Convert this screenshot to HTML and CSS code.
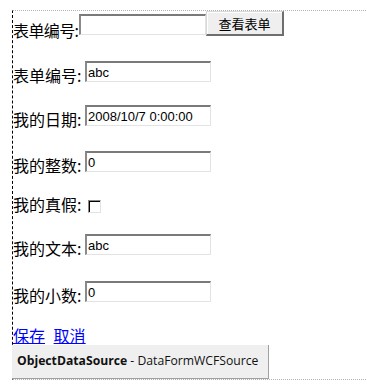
FILE: index.html
```html
<!DOCTYPE html>
<html lang="zh">
<head>
  <meta charset="UTF-8">
  <title>DataForm</title>
  <link rel="stylesheet" href="styles.css">
</head>
<body>

  <div class="design">
    <!-- lookup row -->
    <div class="row row-top">
      <label class="lbl lbl-tight">表单编号:</label>
      <input type="text" class="box box-top">
      <button type="button" class="view-btn">查看表单</button>
    </div>

    <!-- form fields -->
    <div class="row r2">
      <label class="lbl">表单编号:</label>
      <input type="text" class="box" value="abc">
    </div>
    <div class="row r3">
      <label class="lbl">我的日期:</label>
      <input type="text" class="box" value="2008/10/7 0:00:00">
    </div>
    <div class="row r4">
      <label class="lbl">我的整数:</label>
      <input type="text" class="box" value="0">
    </div>
    <div class="row r5">
      <label class="lbl">我的真假:</label>
      <input type="checkbox" class="check">
    </div>
    <div class="row r6">
      <label class="lbl">我的文本:</label>
      <input type="text" class="box" value="abc">
    </div>
    <div class="row r7">
      <label class="lbl">我的小数:</label>
      <input type="text" class="box" value="0">
    </div>

    <div class="actions">
      <a href="#">保存</a>
      <a href="#">取消</a>
    </div>

    <div class="ods"><b>ObjectDataSource</b> - DataFormWCFSource</div>
  </div>

</body>
</html>
```

FILE: styles.css
```css
body {
  margin: 0;
  overflow: hidden;
  background: #fff;
  color: #000;
  font-family: "Noto Sans CJK SC", sans-serif;
}

.design {
  margin: 10px 0 0 12px;
  width: 355px;
  height: 368px;
  border-top: 1px dotted #b4b4b4;
  border-bottom: 1px dotted #b4b4b4;
  border-left: 1px dashed #000;
  display: flex;
  flex-direction: column;
}

.row {
  display: flex;
  align-items: flex-start;
  height: 21px;
}

.row-top { height: 26px; }
.r2 { margin-top: 24px; }
.r3 { margin-top: 23px; }
.r4 { margin-top: 25px; }
.r5 { margin-top: 18px; height: 23px; }
.r6 { margin-top: 21px; }
.r7 { margin-top: 26px; }

.lbl {
  width: 72px;
  flex-shrink: 0;
  font-size: 16px;
  line-height: 16px;
  margin-top: 6px;
  white-space: nowrap;
}

.row-top .lbl-tight {
  width: 66px;
  margin-top: 11px;
  letter-spacing: -0.6px;
}

.box {
  box-sizing: border-box;
  width: 126px;
  height: 21px;
  margin: 0;
  padding: 0 1px;
  font-family: "Liberation Sans", Arial, sans-serif;
  font-size: 13px;
  color: #000;
  background: #fff;
  border-top: 2px solid #7a7a7a;
  border-left: 2px solid #8a8a8a;
  border-right: 1px solid #e3e3e3;
  border-bottom: 1px solid #e3e3e3;
  outline: none;
}

.box-top {
  width: 127px;
  margin-top: 3px;
}

.view-btn {
  box-sizing: border-box;
  width: 78px;
  height: 25px;
  margin: 0;
  padding: 0;
  font-family: "Noto Sans CJK SC", sans-serif;
  font-size: 13px;
  color: #000;
  background: #efefef;
  border-top: 1px solid #d8d8d8;
  border-left: 1px solid #d8d8d8;
  border-right: 2px solid #6e6e6e;
  border-bottom: 2px solid #6e6e6e;
  box-shadow: inset 1px 1px 0 #fff;
}

.check {
  appearance: none;
  box-sizing: border-box;
  width: 13px;
  height: 13px;
  margin: 10px 0 0 3px;
  background: #fff;
  border-top: 1px solid #8a8a8a;
  border-left: 1px solid #8a8a8a;
  border-right: 1px solid #e3e3e3;
  border-bottom: 1px solid #e3e3e3;
  box-shadow: inset 1px 1px 0 #000;
}

.actions {
  margin-top: 24px;
  height: 18px;
  font-size: 16px;
  line-height: 18px;
}

.actions a {
  color: #0000ff;
  margin-right: 5px;
}

.ods {
  box-sizing: border-box;
  margin: 1px 0 0 -1px;
  width: 257px;
  height: 34px;
  padding-left: 5px;
  background: #efefef;
  border-right: 1px solid #a0a0a0;
  border-bottom: 1px solid #a0a0a0;
  font-family: "Open Sans", sans-serif;
  font-size: 12.2px;
  line-height: 31px;
  color: #111;
  white-space: nowrap;
}

.ods b {
  font-weight: 700;
}
```
